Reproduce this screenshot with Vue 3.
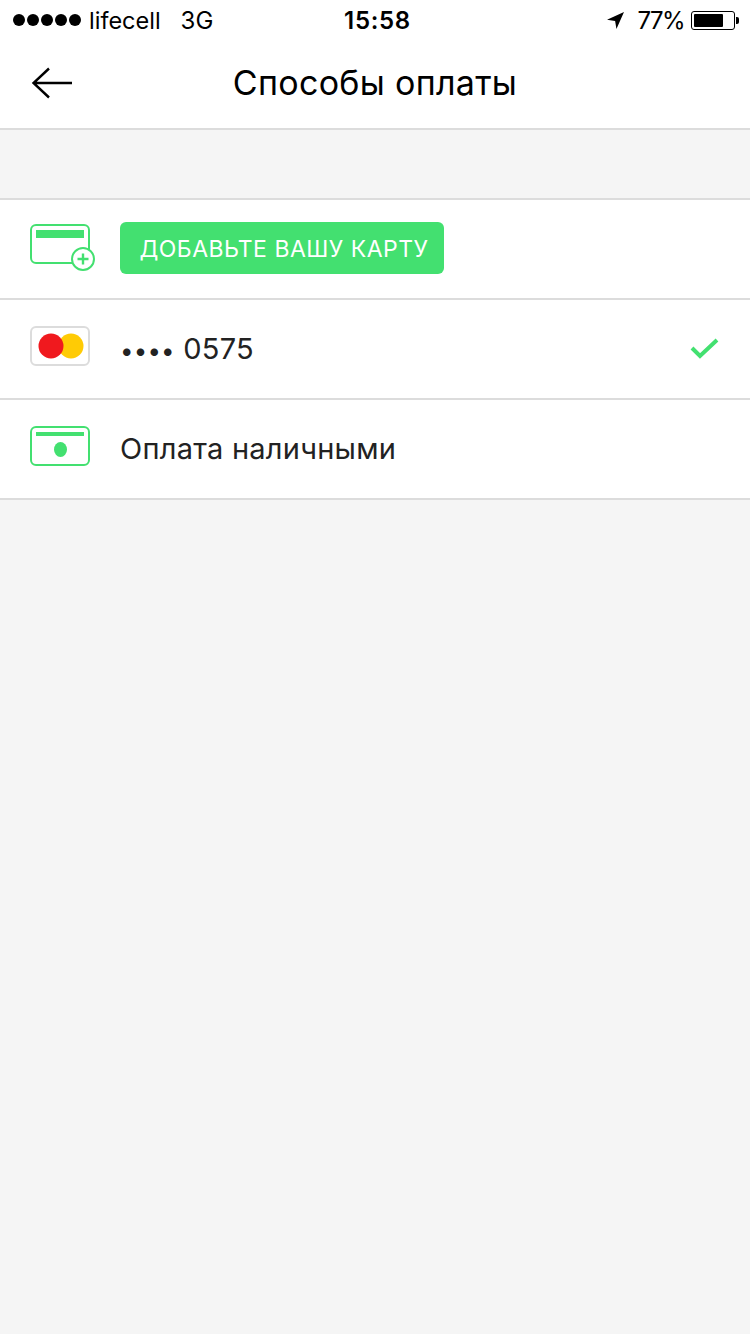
<template>
    <div class="page">
        <div class="status-bar">
            <div class="status-left">
                <div class="signal">
                    <span v-for="n in 5" :key="n" class="signal-dot"></span>
                </div>
                <span class="carrier">lifecell</span>
                <span class="network">3G</span>
            </div>
            <div class="status-time">15:58</div>
            <div class="status-right">
                <svg class="location" width="17" height="17" viewBox="0 0 18 18">
                    <path d="M18 0 L0 8.2 L8.6 9.4 L10 18 Z" fill="#000" />
                </svg>
                <span class="percent">77%</span>
                <div class="battery">
                    <div class="battery-level"></div>
                </div>
                <div class="battery-nub"></div>
            </div>
        </div>

        <div class="nav-bar">
            <svg class="back" width="42" height="32" viewBox="0 0 42 32">
                <path
                    d="M41 16 H2 M18 1.5 L2.5 16 L18 30.5"
                    fill="none"
                    stroke="#000"
                    stroke-width="2.4"
                />
            </svg>
            <h1 class="nav-title">Способы оплаты</h1>
        </div>

        <div class="list">
            <div class="row">
                <svg class="row-icon add-icon" width="66" height="48" viewBox="0 0 66 48">
                    <rect x="1" y="1" width="58" height="38" rx="5" fill="#fff" stroke="#43e070" stroke-width="2" />
                    <rect x="6" y="6" width="48" height="8" fill="#43e070" />
                    <circle cx="53" cy="35" r="11" fill="#fff" stroke="#43e070" stroke-width="2" />
                    <path d="M53 29.5 V40.5 M47.5 35 H58.5" stroke="#43e070" stroke-width="2.4" />
                </svg>
                <button type="button" class="add-button">ДОБАВЬТЕ ВАШУ КАРТУ</button>
            </div>
            <div class="row">
                <svg class="row-icon" width="66" height="48" viewBox="0 0 66 48">
                    <rect x="1" y="1" width="58" height="38" rx="5" fill="#fff" stroke="#dcdcdc" stroke-width="2" />
                    <circle cx="41" cy="20" r="12.5" fill="#ffcb05" />
                    <circle cx="21" cy="20" r="12.5" fill="#f0191e" />
                </svg>
                <span class="row-text">
                    <span class="card-dots">••••</span> 0575
                </span>
                <svg class="check" width="30" height="24" viewBox="0 0 30 24">
                    <path d="M2 11 L10 19 L27 3" fill="none" stroke="#43e070" stroke-width="4" />
                </svg>
            </div>
            <div class="row">
                <svg class="row-icon" width="66" height="48" viewBox="0 0 66 48">
                    <rect x="1" y="1" width="58" height="38" rx="5" fill="#fff" stroke="#43e070" stroke-width="2" />
                    <rect x="6" y="6" width="48" height="4" fill="#43e070" />
                    <ellipse cx="30.5" cy="23.5" rx="6.5" ry="7.5" fill="#43e070" />
                </svg>
                <span class="row-text">Оплата наличными</span>
            </div>
        </div>
    </div>
</template>

<script setup>
</script>

<style>
html,
body {
    margin: 0;
    background: #f5f5f5;
}
</style>

<style scoped>
.page {
    min-height: 1334px;
    background: #f5f5f5;
    font-family: Inter, "Liberation Sans", sans-serif;
    color: #000;
}

.status-bar {
    display: flex;
    align-items: center;
    justify-content: space-between;
    position: relative;
    height: 40px;
    padding: 0 11px 0 13px;
    background: #fff;
    font-size: 24px;
    box-sizing: border-box;
}

.status-left {
    display: flex;
    align-items: center;
}

.signal {
    display: flex;
    gap: 2px;
}

.signal-dot {
    width: 12px;
    height: 12px;
    border-radius: 50%;
    background: #000;
}

.carrier {
    margin-left: 8px;
    font-size: 23.5px;
}

.network {
    margin-left: 20px;
}

.status-time {
    position: absolute;
    left: 0;
    right: 0;
    padding-left: 5px;
    text-align: center;
    font-weight: 600;
    letter-spacing: 0.7px;
}

.status-right {
    display: flex;
    align-items: center;
}

.location {
    margin-right: 14px;
}

.percent {
    margin-right: 7px;
    letter-spacing: -1.6px;
}

.battery {
    width: 44px;
    height: 19px;
    padding: 2px;
    border: 1px solid #000;
    border-radius: 3px;
    box-sizing: border-box;
}

.battery-level {
    width: 77%;
    height: 100%;
    background: #000;
    border-radius: 1px;
}

.battery-nub {
    width: 3px;
    height: 7px;
    margin-left: 1px;
    background: #000;
    border-radius: 0 2px 2px 0;
}

.nav-bar {
    display: flex;
    align-items: center;
    justify-content: center;
    position: relative;
    height: 90px;
    background: #fff;
    border-bottom: 2px solid #dcdcdc;
    box-sizing: border-box;
}

.back {
    position: absolute;
    left: 31px;
    top: 27px;
}

.nav-title {
    margin: 0 0 3px;
    font-size: 34px;
    font-weight: 400;
    letter-spacing: 0.3px;
}

.list {
    margin-top: 68px;
    border-top: 2px solid #dcdcdc;
}

.row {
    display: flex;
    align-items: center;
    height: 100px;
    padding-left: 30px;
    padding-right: 30px;
    background: #fff;
    border-bottom: 2px solid #dcdcdc;
    box-sizing: border-box;
}

.row-icon {
    flex: none;
    align-self: flex-start;
    margin-top: 26px;
    margin-right: 24px;
}

.add-icon {
    margin-top: 24px;
}

.add-button {
    height: 52px;
    width: 324px;
    margin-top: -2px;
    padding: 2px 0 0 4px;
    border: none;
    border-radius: 6px;
    background: #43e070;
    color: #fff;
    font-family: inherit;
    font-size: 23px;
    letter-spacing: 0.5px;
}

.row-text {
    margin-bottom: 2px;
    font-size: 29px;
    letter-spacing: 0.25px;
    color: #222;
}

.card-dots {
    font-size: 24px;
    letter-spacing: 0.2px;
}

.check {
    margin-left: auto;
}
</style>
